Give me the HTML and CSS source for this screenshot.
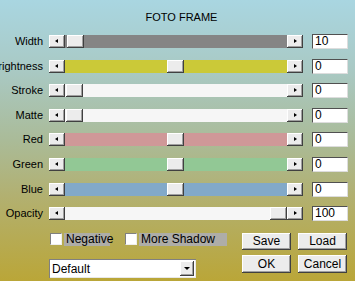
FILE: index.html
```html
<!DOCTYPE html>
<html lang="en">
<head>
    <meta charset="UTF-8">
    <title>Foto Frame</title>
    <link rel="stylesheet" href="styles.css">
</head>
<body>
<div class="dialog">
    <div class="title">FOTO FRAME</div>

    <div class="sliders">
        <div class="label">Width</div>
        <div class="scroll">
            <div class="arrow left"></div>
            <div class="track gray"><div class="thumb" style="margin-left: 2px"></div></div>
            <div class="arrow right"></div>
        </div>
        <div class="value">10</div>

        <div class="label">Brightness</div>
        <div class="scroll">
            <div class="arrow left"></div>
            <div class="track yellow"><div class="thumb" style="margin-left: 102px"></div></div>
            <div class="arrow right"></div>
        </div>
        <div class="value">0</div>

        <div class="label">Stroke</div>
        <div class="scroll">
            <div class="arrow left"></div>
            <div class="track white"><div class="thumb" style="margin-left: 1px"></div></div>
            <div class="arrow right"></div>
        </div>
        <div class="value">0</div>

        <div class="label">Matte</div>
        <div class="scroll">
            <div class="arrow left"></div>
            <div class="track white"><div class="thumb" style="margin-left: 1px"></div></div>
            <div class="arrow right"></div>
        </div>
        <div class="value">0</div>

        <div class="label">Red</div>
        <div class="scroll">
            <div class="arrow left"></div>
            <div class="track red"><div class="thumb" style="margin-left: 102px"></div></div>
            <div class="arrow right"></div>
        </div>
        <div class="value">0</div>

        <div class="label">Green</div>
        <div class="scroll">
            <div class="arrow left"></div>
            <div class="track green"><div class="thumb" style="margin-left: 102px"></div></div>
            <div class="arrow right"></div>
        </div>
        <div class="value">0</div>

        <div class="label">Blue</div>
        <div class="scroll">
            <div class="arrow left"></div>
            <div class="track blue"><div class="thumb" style="margin-left: 102px"></div></div>
            <div class="arrow right"></div>
        </div>
        <div class="value">0</div>

        <div class="label">Opacity</div>
        <div class="scroll">
            <div class="arrow left"></div>
            <div class="track white"><div class="thumb" style="margin-left: 205px"></div></div>
            <div class="arrow right"></div>
        </div>
        <div class="value">100</div>
    </div>

    <div class="bottom">
        <div class="checks">
            <div class="check"><span class="box"></span><span class="check-label negative">Negative</span></div>
            <div class="check"><span class="box"></span><span class="check-label shadow">More Shadow</span></div>
        </div>
        <div class="btn">Save</div>
        <div class="btn">Load</div>

        <div class="select">
            <span class="select-text">Default</span>
            <span class="select-arrow"></span>
        </div>
        <div class="btn tall">OK</div>
        <div class="btn tall">Cancel</div>
    </div>
</div>
</body>
</html>
```

FILE: styles.css
```css
/* Dialog background */
body {
    margin: 0;
    width: 355px;
    height: 281px;
    overflow: hidden;
    background: linear-gradient(to bottom, #a9d6e1 0%, #a9c9c4 25%, #aabb98 50%, #b2b070 70%, #baa638 100%);
    font-family: 'Liberation Sans', Arial, sans-serif;
    font-size: 11px;
    color: #000;
}

.dialog {
    padding-top: 11px;
}

.title {
    text-align: center;
    padding-left: 8px;
    height: 13px;
    line-height: 13px;
    font-size: 11px;
}

/* Slider rows */
.sliders {
    display: grid;
    grid-template-columns: 43px 254px 36px;
    column-gap: 6px;
    grid-auto-rows: 13px;
    row-gap: 11.6px;
    margin-top: 11px;
}

.label {
    display: flex;
    justify-content: flex-end;
    white-space: nowrap;
    line-height: 13px;
    font-size: 11px;
}

.scroll {
    display: flex;
    height: 13px;
}

.sliders .value {
    margin-left: 3px;
}

.arrow,
.thumb {
    background: #ececec;
    box-shadow: inset -1px -1px #404040, inset 1px 1px #fff, inset -2px -2px #a0a0a0;
}

.arrow {
    width: 16px;
    height: 13px;
    position: relative;
}

/* small black triangles on the arrow buttons */
.arrow::after {
    content: '';
    position: absolute;
    top: 4px;
    width: 0;
    height: 0;
    border-top: 2.5px solid transparent;
    border-bottom: 2.5px solid transparent;
}

.arrow.left::after {
    left: 6px;
    border-right: 3px solid #000;
}

.arrow.right::after {
    left: 7px;
    border-left: 3px solid #000;
}

.track {
    flex: 1;
    height: 13px;
}

.thumb {
    width: 17px;
    height: 13px;
}

.gray { background: #858585; }
.yellow { background: #cbc938; }
.white { background: #f6f6f6; }
.red { background: #cf9898; }
.green { background: #92c895; }
.blue { background: #82a9c9; }

.value {
    height: 13px;
    line-height: 13px;
    font-size: 12px;
    margin-top: -1px;
    padding: 0 2px;
    width: 30px;
    background: #fff;
    border: 1px solid #505050;
    border-right-color: #ddd;
    border-bottom-color: #ddd;
}

/* Bottom controls */
.bottom {
    display: grid;
    grid-template-columns: 186px 49px 49px;
    grid-template-rows: 17px 18px;
    column-gap: 7px;
    row-gap: 5px;
    margin-top: 13px;
    padding-left: 49px;
}

.checks {
    display: flex;
    gap: 15px;
    padding-left: 1px;
}

.check {
    display: flex;
    align-items: flex-start;
    gap: 2px;
}

.box {
    width: 10px;
    height: 10px;
    background: #fff;
    border: 1px solid #808080;
    border-right-color: #eee;
    border-bottom-color: #eee;
}

.check-label {
    background: #aeada8;
    height: 13px;
    line-height: 13px;
    padding-left: 2px;
    font-size: 12px;
}

.negative { width: 44px; }
.shadow { width: 86px; }

.btn {
    background: #ececec;
    box-shadow: inset -1px -1px #404040, inset 1px 1px #fff, inset -2px -2px #a0a0a0;
    text-align: center;
    line-height: 16px;
    font-size: 12px;
}

.btn.tall {
    line-height: 18px;
}

.select {
    width: 147px;
    height: 19px;
    margin-top: 4px;
    background: #fff;
    box-shadow: inset 1px 1px #808080, inset -1px -1px #e8e8e8;
    display: flex;
    align-items: center;
    justify-content: space-between;
    padding: 0 2px 0 3px;
    box-sizing: border-box;
    font-size: 12px;
}

.select-arrow {
    width: 14px;
    height: 15px;
    background: #ececec;
    box-shadow: inset -1px -1px #404040, inset 1px 1px #fff, inset -2px -2px #a0a0a0;
    position: relative;
}

.select-arrow::after {
    content: '';
    position: absolute;
    left: 4px;
    top: 6px;
    border-left: 3px solid transparent;
    border-right: 3px solid transparent;
    border-top: 3px solid #000;
}
```
